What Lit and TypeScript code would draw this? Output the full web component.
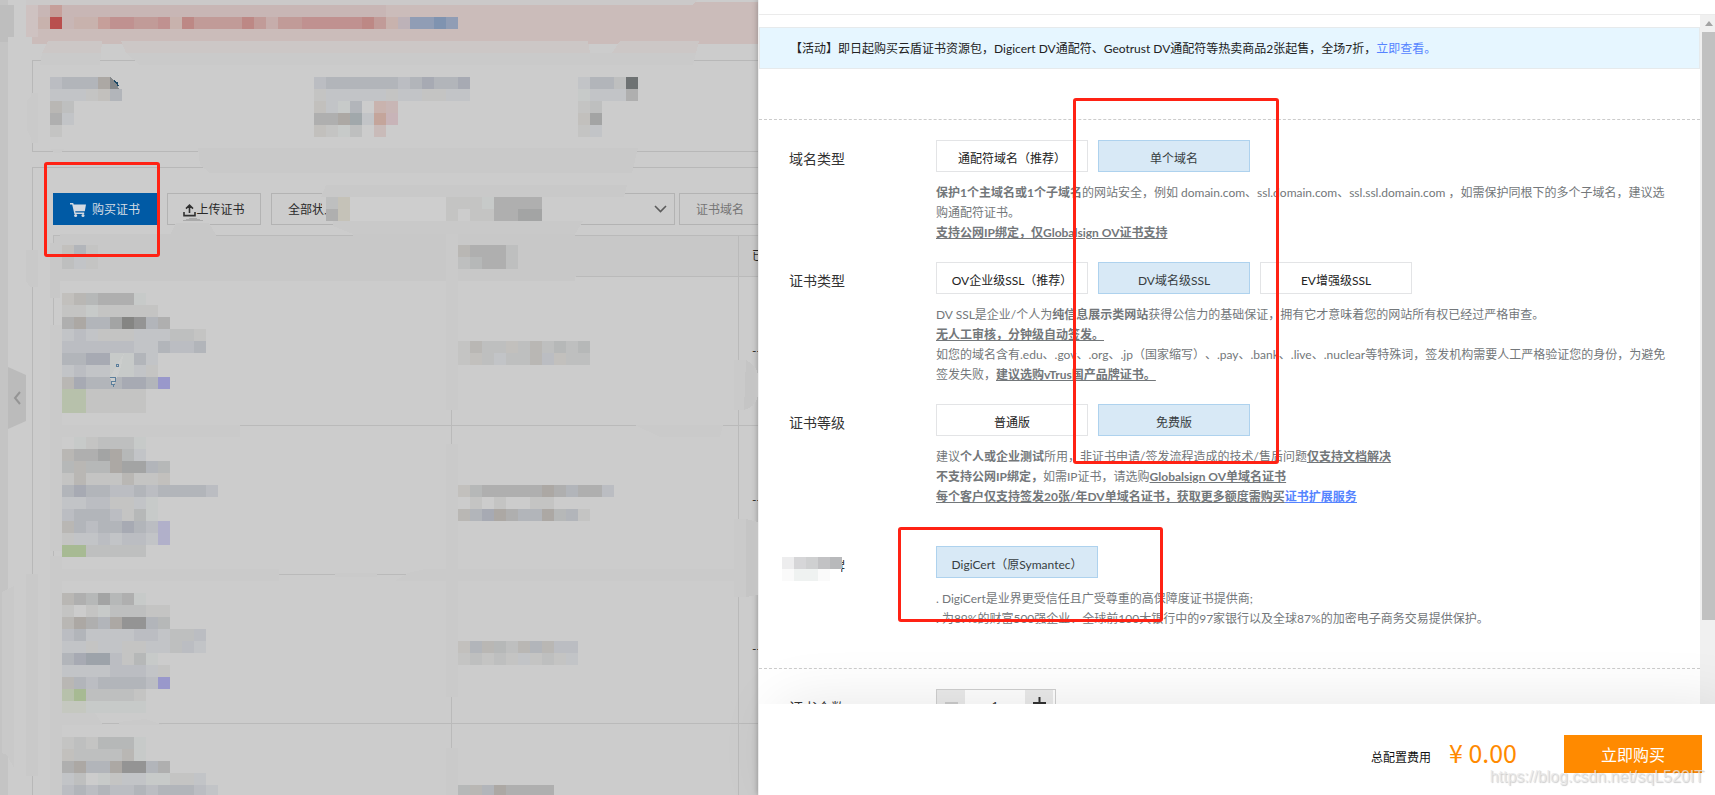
import { LitElement, html, css, svg } from "lit";
import { customElement, property, state } from "lit/decorators.js";

const FONT = css`
  :host {
    font-family: Lato, "Noto Sans CJK SC", sans-serif;
    font-size: 12px;
    line-height: 20px;
    text-spacing-trim: space-all;
  }
  * {
    box-sizing: border-box;
  }
  button,
  input,
  select {
    font: inherit;
    margin: 0;
    border-radius: 0;
  }
`;

/* One letter per 12px tile; a dot leaves the tile open. */
const TILE = 12;
const PALETTE: Record<string, string> = {
  a: "#c4c4c3", b: "#bebfbf", c: "#b6b8b8", d: "#afafaf", e: "#a3a4a4", f: "#949494", g: "#858583",
  h: "#c2c4c7", i: "#bbbdc2", j: "#b2b5ba", k: "#a7aab3", l: "#9da3aa",
  m: "#c2c0bd", n: "#b9b7b4", o: "#aca8a4",
  p: "#b7c1ab", q: "#a7ba93", r: "#c5c8c0", u: "#c7cac9",
  s: "#9998cb", t: "#b1b0ca",
  R: "#b94f4e", A: "#c69f9a", B: "#c09190", C: "#c19b98", D: "#bd8885", E: "#c6adab", F: "#c8b2ad", G: "#c8b6b5",
  Y: "#bdb2b8", Z: "#909db5", X: "#7f93b0",
  1: "#c9b3ae", 2: "#a1a8ab", 3: "#c4a59b", 4: "#c8b4b8", 5: "#c9bbb9", 6: "#6e7273", 7: "#c5c2b8",
  v: "#ededee", w: "#d6d6d8", x: "#cfd0d1", y: "#c2c2c4", z: "#b8b9bb", V: "#fafafa", W: "#eff2f1",
};

interface Patch {
  x: number;
  y: number;
  rows: string[];
}

const PATCHES: Patch[] = [
  { x: 38, y: 5, rows: ["GAGGGGGGGGGGGGGGGGGGGGGGGGGGG", "FRGFFABBCCBFDCCCCDCECCBBBBBDCFYZZXZ"] },
  { x: 50, y: 77, rows: ["ijjjo", "hhhamj", "nb", "dh", "a"] },
  { x: 314, y: 77, rows: ["ijjjjjjijkjjk", "ahhhhhahhaahh", "mhuj.1G", "ddo2h34", "maub.5"] },
  { x: 578, y: 77, rows: ["hjjb6", "uhhhd", "ab", "me", "ah"] },
  { x: 326, y: 197, rows: ["b7", "d7"] },
  { x: 446, y: 197, rows: ["aaaudddd", "a.aaddee"] },
  { x: 62, y: 245, rows: ["mja", "bha"] },
  { x: 458, y: 245, rows: ["ndddb", "bcddb"] },
  {
    x: 62, y: 293,
    rows: ["mncdddu", "aauaaaaa", "dojjegfjd", "hihaaahhhbba", "iiiiiihhjiij", "jjkkuujh", "hihhuuha", "nkjjjkkjs", "ppaaaaa", "ppaaaaa"],
  },
  { x: 458, y: 341, rows: ["anbbmbnbcbc", "ambhbbnimbb"] },
  {
    x: 62, y: 437,
    rows: [".uabbbu", "nddeoch", "cnccoeejc", "anaaanaam", "jkjjiijijjjji", "hhiiaahu", "ijjjiacu", "njijjkjit", "ahhihiiht", "qqbbbbb"],
  },
  { x: 458, y: 485, rows: ["mcdddddodjddi", ".a.a..aa", "njkodjjocja"] },
  {
    x: 62, y: 593,
    rows: ["ndcecdu", "a.aubbbaa", "nodjoffjc", "ijhhhhiihbbi", "hhahhaahhbih", "jklliacu", "hhhhiiiha", "njijjjjis", "pqbbbba", "rruuuuu"],
  },
  { x: 458, y: 641, rows: ["mjncbnjnii", "ababahabah"] },
  { x: 62, y: 737, rows: ["abacccu", "mbbbbnu", "dojjoffjd", "hb.uahhuuaah", "ijijiijijjjih"] },
  { x: 458, y: 785, rows: ["cnjodddd"] },
  { x: 782, y: 557, rows: ["vwxyz", "VWWV"] },
];

interface Smear {
  d: string;
  fill: string;
}

const S1 = "#cacaca";
const S2 = "#cccccc";
const SMEARS: Smear[] = [
  { d: "M0 5H14V37H8V42H0z", fill: "#bebebe" },
  { d: "M26 5H38V37H26z", fill: "#cec2c1" },
  { d: "M26 0H698L692 5H26z", fill: "#cbc9c9" },
  { d: "M48 41H102L101 53H42z", fill: "#ccc7c6" },
  { d: "M42 53H101L100 65H40z", fill: S1 },
  { d: "M121 41H588L590 53H126z", fill: "#ccc7c6" },
  { d: "M126 53H612L620 41H699L696 53L693 65H140z", fill: S1 },
  { d: "M620 41H699L696 53H612z", fill: "#ccc7c6" },
  { d: "M34 93H36V143H34L27 130V100z", fill: S1 },
  { d: "M31 93H38V143H31z", fill: S1 },
  { d: "M50 149H65L60 153H54z", fill: S1 },
  { d: "M198 148H638L632 173H210L200 165z", fill: "#c9c9c9" },
  { d: "M326 185H627L624 197H321z", fill: "#c9c9c9" },
  { d: "M322 197H620V221H333L322 210z", fill: S2 },
  { d: "M350 197H446V221H350z", fill: "#cecece" },
  { d: "M333 221H583L575 234H353L333 226z", fill: "#c9c9c9" },
  { d: "M182 221Q193 215 204 221z", fill: "#aaaaaa" },
  { d: "M176 223H209L216 235V240H170V235z", fill: "#c8c8c8" },
  { d: "M60 234H213V240H60zM353 234H575V240H353zM50 243H60V298H50z", fill: "#c8c8c8" },
  { d: "M50 245H580L575 281H50z", fill: "#c8c8c8" },
  { d: "M446 234H458V410H446zM446 444H458V697H446zM446 748H458V795H446z", fill: S1 },
  { d: "M26 250H38V287H30L26 281zM26 574H38V776H26z", fill: "#c9c9c9" },
  { d: "M50 325H62V551H50zM50 556H62V795H50z", fill: S1 },
  { d: "M50 425H240V437H50zM635 425H723L720 437H660z", fill: S1 },
  { d: "M50 569H279V581H50zM335 573H377V577H335zM408 573L425 569H758V581H395z", fill: S1 },
  { d: "M50 713H95L103 725H50zM119 722L145 719L164 725H119z", fill: S1 },
  { d: "M734 360H746V410H734zM734 519H746V597H734z", fill: S1 },
  { d: "M746 360C754 364 758 370 758 376V396C756 404 750 409 744 410zM746 519L758 522V595L746 597z", fill: "#c5c5c5" },
  { d: "M2 592L14 586V768L7 755L2 753z", fill: "#c9c9c9" },
  { d: "M782 545H847V560H782zM782 572H847V576H782zM782 557H841V581H782z", fill: "#ffffff" },
];

@customElement("mosaic-layer")
export class MosaicLayer extends LitElement {
  static styles = css`
    :host {
      display: block;
    }
    svg {
      display: block;
      width: 100%;
      height: 100%;
    }
  `;

  render() {
    return html`<svg aria-hidden="true" shape-rendering="crispEdges">
      ${SMEARS.map((s) => svg`<path d=${s.d} fill=${s.fill}></path>`)}
      ${PATCHES.map((p) =>
        p.rows.map((row, r) =>
          [...row].map((c, i) =>
            c === "."
              ? null
              : svg`<rect x=${p.x + i * TILE} y=${p.y + r * TILE} width=${TILE} height=${TILE} fill=${PALETTE[c]}></rect>`
          )
        )
      )}
      <path d="M110 77V89H119L115 81z" fill="#85888a" />
      <path d="M114 81l3 2 1 3" stroke="#1d4a66" stroke-width="1.5" fill="none" />
      <path d="M124 353L110 377L113 387L120 370z" fill="#cccecd" />
      <path d="M110 377h5v4h-4v3h4M113 385v2M116 364h2v2h-2z" stroke="#5c7f9c" fill="none" />
    </svg>`;
  }
}

@customElement("console-page")
export class ConsolePage extends LitElement {
  static styles = [
    FONT,
    css`
      :host {
        display: flex;
        background: #cccccc;
        color: #292929;
        overflow: hidden;
      }
      .rail {
        flex: none;
        width: 8px;
        background: #c4c4c4;
      }
      .fold {
        position: absolute;
        left: 8px;
        top: 367px;
        width: 18px;
        height: 62px;
        padding: 0;
        border: 0;
        background: #bbbbbb;
        clip-path: polygon(0 0, 100% 8px, 100% 54px, 0 100%);
        display: grid;
        place-items: center;
      }
      .main {
        flex: 1;
        min-width: 0;
        padding: 2px 24px 0;
        display: flex;
        flex-direction: column;
      }
      .notice {
        height: 42px;
        flex: none;
        background: #cbbcba;
      }
      .card {
        flex: none;
        border: 1px solid #b8b8b8;
      }
      .summary {
        height: 92px;
        margin: 16px 0 15px;
      }
      .list {
        padding: 25px 20px;
      }
      .tools {
        display: flex;
        height: 32px;
        margin-bottom: 10px;
      }
      .tools button {
        display: flex;
        align-items: center;
        justify-content: center;
        padding: 2px 0 0;
      }
      .buy {
        width: 104px;
        gap: 6px;
        margin-right: 10px;
        border: 0;
        background: #005aa5;
        color: #d6dde4;
      }
      .upload {
        width: 94px;
        margin-right: 10px;
        border: 1px solid #b3b3b3;
        background: none;
        color: #292929;
      }
      .status {
        display: grid;
        width: 404px;
        margin-right: 4px;
      }
      .status > * {
        grid-area: 1 / 1;
      }
      .status select {
        appearance: none;
        padding: 2px 16px 0;
        border: 1px solid #b3b3b3;
        background: none;
        color: #292929;
      }
      .status svg {
        place-self: center end;
        margin-right: 8px;
        pointer-events: none;
      }
      .search {
        flex: 1;
        min-width: 0;
        padding: 2px 16px 0;
        border: 1px solid #b3b3b3;
        background: none;
      }
      .search::placeholder {
        color: #757575;
        opacity: 1;
      }
      table {
        width: 100%;
        table-layout: fixed;
        border-collapse: collapse;
      }
      .c1 {
        width: 398px;
      }
      .c2 {
        width: 287px;
      }
      th,
      td {
        border: 1px solid #bababa;
        padding: 0 13px;
        text-align: left;
        font-weight: 400;
      }
      th {
        height: 41px;
        background: #c8c8c8;
      }
      td {
        height: 149px;
      }
    `,
  ];

  render() {
    return html`
      <div class="rail"></div>
      <button class="fold" aria-label="收起">
        <svg width="8" height="14" fill="none" stroke="#959595" stroke-width="2"><path d="M7 1L2 7l5 6" /></svg>
      </button>
      <div class="main">
        <div class="notice"></div>
        <section class="card summary"></section>
        <section class="card list">
          <div class="tools">
            <button class="buy">
              <svg width="16" height="14" fill="#d3dae2">
                <path d="M0 0h3.2l.5 1.6H16l-1.2 6.6H5.2l.3 1.4h8.7v1.3H4.4L2.2 1.4H0z" />
                <circle cx="5.6" cy="12.5" r="1.5" />
                <circle cx="13" cy="12.5" r="1.5" />
              </svg>
              购买证书
            </button>
            <button class="upload">
              <svg width="13" height="13" fill="none" stroke="#303030" stroke-width="1.6">
                <path d="M6.5 9V1.5M3 4.6l3.5-3.4L10 4.6M1 8v3.6h11V8" />
              </svg>
              上传证书
            </button>
            <div class="status">
              <select aria-label="证书状态">
                <option>全部状态</option>
              </select>
              <svg width="13" height="8" fill="none" stroke="#5c5c5c" stroke-width="1.6"><path d="M1 1l5.5 5.5L12 1" /></svg>
            </div>
            <input class="search" aria-label="证书域名" placeholder="证书域名" />
          </div>
          <table>
            <colgroup>
              <col class="c1" />
              <col class="c2" />
              <col />
            </colgroup>
            <thead>
              <tr><th></th><th></th><th>已部署</th></tr>
            </thead>
            <tbody>
              ${[1, 2, 3, 4].map(() => html`<tr><td></td><td></td><td>--</td></tr>`)}
            </tbody>
          </table>
        </section>
      </div>
    `;
  }
}

@customElement("option-row")
export class OptionRow extends LitElement {
  @property() label = "";
  @property({ attribute: false }) options: string[] = [];
  @property({ type: Number }) selected = 0;
  @property({ type: Boolean }) wide = false;

  static styles = [
    FONT,
    css`
      :host {
        display: grid;
        grid-template-columns: 147px minmax(0, 1fr);
      }
      .label {
        font-size: 14px;
        line-height: 38px;
        color: #333333;
      }
      .options {
        display: flex;
        gap: 10px;
        margin-bottom: 11px;
      }
      button {
        width: 152px;
        height: 32px;
        padding: 6px 0 0;
        border: 1px solid #e3e4e6;
        background: #ffffff;
        color: #222222;
        white-space: nowrap;
      }
      .wide button {
        width: 162px;
      }
      button[aria-pressed="true"] {
        border-color: #aed2ee;
        background: #d8e9f6;
        color: #373d41;
      }
      .note {
        color: #73777a;
      }
    `,
  ];

  render() {
    return html`
      <div class="label" id="label">${this.label}</div>
      <div>
        <div class="options ${this.wide ? "wide" : ""}" role="group" aria-labelledby="label">
          ${this.options.map(
            (o, i) => html`<button aria-pressed=${i === this.selected} @click=${() => (this.selected = i)}>${o}</button>`
          )}
        </div>
        <div class="note"><slot></slot></div>
      </div>
    `;
  }
}

@customElement("order-drawer")
export class OrderDrawer extends LitElement {
  @state() private count = 1;

  static styles = [
    FONT,
    css`
      :host {
        display: flex;
        flex-direction: column;
        background: #ffffff;
        border-left: 1px solid #f0f0f0;
        box-shadow: 0 0 6px rgba(0, 0, 0, 0.3);
      }
      .top {
        flex: none;
        height: 15px;
        border-bottom: 1px solid #ebebeb;
      }
      .middle {
        flex: 1;
        min-height: 0;
        display: flex;
        overflow: hidden;
      }
      .content {
        flex: 1;
        min-width: 0;
        padding-top: 12px;
      }
      .alert {
        height: 42px;
        padding: 1px 30px 0;
        border: 1px solid #e6eaec;
        background: #e6f6ff;
        color: #222222;
        line-height: 40px;
        margin-bottom: 50px;
      }
      a {
        color: #5584ff;
        text-decoration: none;
      }
      u a {
        text-decoration: underline;
      }
      .group {
        display: flex;
        flex-direction: column;
        gap: 19px;
        padding: 20px 25px 39px 30px;
        border-top: 1px dashed #cccccc;
      }
      .brand {
        margin-top: 20px;
      }
      .quantity {
        display: grid;
        grid-template-columns: 147px minmax(0, 1fr);
      }
      .quantity label {
        font-size: 14px;
        line-height: 38px;
        color: #333333;
      }
      .stepper {
        display: flex;
        width: 120px;
        height: 32px;
        padding-right: 2px;
        border: 1px solid #d0d0d0;
      }
      .stepper button {
        width: 28px;
        padding: 0 0 4px;
        border: 0;
        background: #ebebeb;
        color: #333333;
        display: grid;
        place-items: center;
      }
      .stepper button:first-child {
        color: #cccccc;
      }
      .stepper input {
        flex: 1;
        min-width: 0;
        border: 0;
        padding: 2px 0 0;
        text-align: center;
        color: #333333;
      }
      .scrollbar {
        flex: none;
        width: 15px;
        padding-left: 2px;
        background: #f0f0f0;
        display: flex;
        flex-direction: column;
      }
      .arrow {
        height: 17px;
        display: grid;
        place-items: center;
      }
      .thumb {
        flex: 7;
        background: #c1c1c1;
      }
      .rest {
        flex: 1;
      }
      .footer {
        flex: none;
        position: relative;
        display: flex;
        align-items: center;
        justify-content: flex-end;
        height: 91px;
        padding: 8px 13px 0;
        background: #ffffff;
        box-shadow: 20px 0 60px rgba(0, 0, 0, 0.1);
      }
      .sum {
        margin: 8px 18px 0 0;
        color: #111111;
      }
      .price {
        font-size: 25px;
        margin: 0 47px 4px 0;
        color: #ff8a00;
        font-family: "Noto Sans CJK SC", sans-serif;
      }
      .submit {
        width: 138px;
        height: 38px;
        padding: 2px 0 0;
        border: 0;
        background: #ff8a00;
        color: #ffffff;
        font-size: 16px;
      }
    `,
  ];

  render() {
    return html`
      <div class="top"></div>
      <div class="middle">
        <div class="content">
          <div class="alert">
            【活动】即日起购买云盾证书资源包，Digicert DV通配符、Geotrust DV通配符等热卖商品2张起售，全场7折，<a href="#">立即查看。</a>
          </div>
          <div class="group">
            <option-row label="域名类型" .options=${["通配符域名（推荐）", "单个域名"]} .selected=${1}>
              <b>保护1个主域名或1个子域名</b>的网站安全，例如 domain.com、ssl.domain.com、ssl.ssl.domain.com
              ，如需保护同根下的多个子域名，建议选购通配符证书。<br />
              <b><u>支持公网IP绑定，仅Globalsign OV证书支持</u></b>
            </option-row>
            <option-row label="证书类型" .options=${["OV企业级SSL（推荐）", "DV域名级SSL", "EV增强级SSL"]} .selected=${1}>
              DV SSL是企业/个人为<b>纯信息展示类网站</b>获得公信力的基础保证，拥有它才意味着您的网站所有权已经过严格审查。<br />
              <b><u>无人工审核，分钟级自动签发。</u></b><br />
              如您的域名含有.edu、.gov、.org、.jp（国家缩写）、.pay、.bank、.live、.nuclear等特殊词，签发机构需要人工严格验证您的身份，为避免签发失败，<b><u>建议选购vTrus国产品牌证书。</u></b>
            </option-row>
            <option-row label="证书等级" .options=${["普通版", "免费版"]} .selected=${1}>
              建议<b>个人或企业测试</b>所用，非证书申请/签发流程造成的技术/售后问题<b><u>仅支持文档解决</u></b><br />
              <b>不支持公网IP绑定，</b>如需IP证书，请选购<b><u>Globalsign OV单域名证书</u></b><br />
              <b><u>每个客户仅支持签发20张/年DV单域名证书，获取更多额度需购买<a href="#">证书扩展服务</a></u></b>
            </option-row>
            <option-row class="brand" label="证书品牌" .options=${["DigiCert（原Symantec）"]} wide>
              . DigiCert是业界更受信任且广受尊重的高保障度证书提供商;<br />
              . 为89%的财富500强企业、全球前100大银行中的97家银行以及全球87%的加密电子商务交易提供保护。
            </option-row>
          </div>
          <div class="group">
            <div class="quantity">
              <label for="count">证书个数</label>
              <div class="stepper">
                <button aria-label="减少" @click=${() => (this.count = Math.max(1, this.count - 1))}>
                  <svg width="13" height="13" fill="none" stroke="currentColor" stroke-width="2"><path d="M0 6h13" /></svg>
                </button>
                <input id="count" .value=${String(this.count)} />
                <button aria-label="增加" @click=${() => (this.count += 1)}>
                  <svg width="13" height="13" fill="none" stroke="currentColor" stroke-width="2"><path d="M0 6h13M6.5 0v13" /></svg>
                </button>
              </div>
            </div>
          </div>
        </div>
        <div class="scrollbar">
          <div class="arrow"><svg width="8" height="5" fill="#a3a3a3"><path d="M0 5l4-5 4 5z" /></svg></div>
          <div class="thumb"></div>
          <div class="rest"></div>
        </div>
      </div>
      <div class="footer">
        <span class="sum">总配置费用</span>
        <span class="price">¥ 0.00</span>
        <button class="submit">立即购买</button>
      </div>
    `;
  }
}

@customElement("app-root")
export class AppRoot extends LitElement {
  static styles = [
    FONT,
    css`
      :host {
        display: grid;
        position: relative;
        height: 100vh;
        overflow: hidden;
      }
      console-page {
        min-width: 0;
        min-height: 0;
      }
      order-drawer {
        position: absolute;
        top: 0;
        right: 0;
        bottom: 0;
        width: 957px;
        max-width: 100%;
      }
      mosaic-layer {
        position: absolute;
        inset: 0;
        pointer-events: none;
      }
      .mark {
        position: absolute;
        border: 3px solid #ff2214;
        border-radius: 3px;
        pointer-events: none;
      }
      .mark-buy {
        left: 44px;
        top: 162px;
        width: 116px;
        height: 95px;
      }
      .mark-types {
        left: 1073px;
        top: 98px;
        width: 206px;
        height: 366px;
      }
      .mark-brand {
        left: 898px;
        top: 527px;
        width: 265px;
        height: 95px;
      }
      .watermark {
        position: absolute;
        right: 11px;
        bottom: 8px;
        font-family: "Liberation Sans", sans-serif;
        font-size: 16px;
        color: rgba(232, 232, 232, 0.8);
        text-shadow: 1px 1px 1px rgba(0, 0, 0, 0.2);
        pointer-events: none;
      }
    `,
  ];

  render() {
    return html`
      <console-page></console-page>
      <order-drawer></order-drawer>
      <mosaic-layer></mosaic-layer>
      <div class="mark mark-buy"></div>
      <div class="mark mark-types"></div>
      <div class="mark mark-brand"></div>
      <div class="watermark">https://blog.csdn.net/sqL520IT</div>
    `;
  }
}
